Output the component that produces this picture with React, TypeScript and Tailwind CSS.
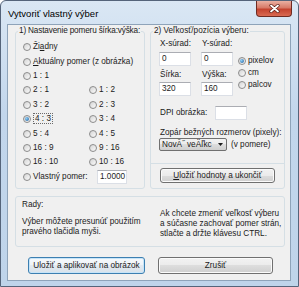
import React from 'react';

const Radio = ({ checked = false }: { checked?: boolean }) => (
  <span className="flex h-[8px] w-[8px] shrink-0 items-center justify-center rounded-full border border-[#8c8c8c] bg-[linear-gradient(135deg,#d4d4d4,#fbfbfb)]">
    {checked && <span className="h-[4px] w-[4px] rounded-full bg-[radial-gradient(circle_at_35%_35%,#8fd0f7,#1a5a9c)]" />}
  </span>
);

const Option = ({ children, checked = false }: { children: React.ReactNode; checked?: boolean }) => (
  <div className="flex items-center gap-[2px]">
    <Radio checked={checked} />
    <span>{children}</span>
  </div>
);

const TextBox = ({ value = '', className = '' }: { value?: string; className?: string }) => (
  <div className={`h-[14px] border border-[#dbdfe6] border-t-[#abadb3] bg-white pl-[2px] leading-[12px] ${className}`}>{value}</div>
);

const Button = ({ children, primary = false, className = '' }: { children: React.ReactNode; primary?: boolean; className?: string }) => (
  <div
    className={`flex items-center justify-center whitespace-nowrap rounded-[3px] border ${
      primary
        ? 'border-[#3c7fb1] bg-[linear-gradient(180deg,#f6f9fc_0%,#eef3f8_50%,#e2e9f0_50%,#d8e2eb_100%)] shadow-[inset_0_0_0_1px_#c6e4f8]'
        : 'border-[#707070] bg-[linear-gradient(180deg,#f2f2f2_0%,#ebebeb_50%,#dddddd_50%,#cfcfcf_100%)] shadow-[inset_0_0_0_1px_#fbfbfb]'
    } ${className}`}
  >
    {children}
  </div>
);

const ratios: [string, string][] = [
  ['2 : 1', '1 : 2'],
  ['3 : 2', '2 : 3'],
  ['4 : 3', '3 : 4'],
  ['5 : 4', '4 : 5'],
  ['16 : 9', '9 : 16'],
  ['16 : 10', '10 : 16'],
];

export default function App() {
  return (
    <div className="h-[287px] w-[299px] bg-white font-['Liberation_Sans',Arial,sans-serif] text-[8.2px] leading-[10px] text-[#1b1b1b]">
      <div className="flex h-full w-full flex-col rounded-t-[6px] border border-[#55647a] bg-[linear-gradient(180deg,#dae7f4_0%,#c2d6ec_40%,#bfd4ea_100%)]">
        {/* title bar */}
        <div className="flex h-[23px] shrink-0 items-start justify-between">
          <span className="pl-[7px] pt-[7px] text-[9.5px] leading-[12px] text-black">Vytvoriť vlastný výber</span>
          <div className="mr-[6px] flex h-[16px] w-[36px] items-center justify-center rounded-b-[4px] border border-t-0 border-[#6f2b22] bg-[linear-gradient(180deg,#eab0a2_0%,#d77a68_45%,#c4432f_55%,#d96a52_100%)]">
            <svg width="11" height="9" viewBox="0 0 11 9">
              <path d="M2 1.5 L9 7.5 M9 1.5 L2 7.5" stroke="#5a1d16" strokeWidth="3.2" strokeLinecap="round" />
              <path d="M2 1.5 L9 7.5 M9 1.5 L2 7.5" stroke="#ffffff" strokeWidth="1.8" strokeLinecap="round" />
            </svg>
          </div>
        </div>

        {/* client area */}
        <div className="mb-[5px] ml-[6px] mr-[7px] flex-1 border border-[#8ea3b9] bg-[#f0f0f0] pl-[7px] pt-[1px]">
          <div className="flex gap-[5px]">
            <fieldset className="h-[163px] w-[130px] rounded-[3px] border border-[#d5dfe5]">
              <legend className="ml-[2px] whitespace-nowrap px-[1px] tracking-[-0.15px]">1) Nastavenie pomeru šírka:výška:</legend>
              <div className="pl-[7px] pt-[4px]">
                <div className="flex h-[14.4px] items-center">
                  <Option>
                    Ži<span className="underline underline-offset-[1px]">a</span>dny
                  </Option>
                </div>
                <div className="flex h-[14.4px] items-center">
                  <Option>
                    <span className="underline underline-offset-[1px]">A</span>ktuálny pomer (z obrázka)
                  </Option>
                </div>
                <div className="flex h-[14.4px] items-center">
                  <Option>1 : 1</Option>
                </div>
                {ratios.map(([a, b]) => (
                  <div key={a} className="grid h-[14.4px] grid-cols-[66px_1fr] items-center">
                    <Option checked={a === '4 : 3'}>
                      {a === '4 : 3' ? <span className="border border-dotted border-[#6a6a6a] px-[1px]">{a}</span> : a}
                    </Option>
                    <Option>{b}</Option>
                  </div>
                ))}
                <div className="flex h-[15px] items-center">
                  <Option>
                    <span className="inline-block w-[64px]">Vlastný pomer:</span>
                  </Option>
                  <TextBox value="1.0000" className="h-[13px] w-[30px] leading-[11px]" />
                </div>
              </div>
            </fieldset>

            <fieldset className="h-[163px] w-[135px] rounded-[3px] border border-[#d5dfe5]">
              <legend className="ml-[2px] whitespace-nowrap px-[1px]">2) Veľkosť/pozícia výberu:</legend>
              <div className="pl-[8px] pt-[3px]">
                <div className="flex">
                  <div className="grid grid-cols-[32px_32px] gap-x-[10px]">
                    <span className="pl-[1px]">X-súrad:</span>
                    <span className="pl-[1px]">Y-súrad:</span>
                    <TextBox value="0" className="mt-[3px]" />
                    <TextBox value="0" className="mt-[3px]" />
                    <span className="mt-[4px] pl-[1px]">Šírka:</span>
                    <span className="mt-[4px] pl-[1px]">Výška:</span>
                    <TextBox value="320" className="mt-[2px]" />
                    <TextBox value="160" className="mt-[2px]" />
                  </div>
                  <div className="ml-[5px] flex flex-col pt-[16px]">
                    <div className="flex h-[12px] items-center">
                      <Option checked>pixelov</Option>
                    </div>
                    <div className="flex h-[12px] items-center">
                      <Option>cm</Option>
                    </div>
                    <div className="flex h-[12px] items-center">
                      <Option>palcov</Option>
                    </div>
                  </div>
                </div>
                <div className="mt-[10px] flex items-center">
                  <span className="w-[56px] pl-[1px]">DPI obrázka:</span>
                  <TextBox className="w-[32px]" />
                </div>
                <div className="mt-[8px] whitespace-nowrap pl-[1px]">Zopár bežných rozmerov (pixely):</div>
                <div className="flex items-center">
                  <div className="flex h-[13px] w-[68px] items-center rounded-[2px] border border-[#707070] bg-[linear-gradient(180deg,#f2f2f2_0%,#ebebeb_50%,#dddddd_50%,#cfcfcf_100%)]">
                    <span className="flex-1 overflow-hidden whitespace-nowrap pl-[2px] leading-[11px]">NovĂ˝ veÄľkc</span>
                    <span className="flex h-full w-[11px] items-center justify-center">
                      <svg width="5" height="3" viewBox="0 0 5 3">
                        <path d="M0 0 H5 L2.5 3 Z" fill="#1b1b1b" />
                      </svg>
                    </span>
                  </div>
                  <span className="ml-[4px]">(v pomere)</span>
                </div>
              </div>
              <div className="mt-[12px] border-t border-[#d5dfe5]" />
              <div className="pl-[9px] pt-[4px]">
                <Button className="h-[15px] w-[115px]">
                  <span>
                    <span className="underline underline-offset-[1px]">U</span>ložiť hodnoty a ukončiť
                  </span>
                </Button>
              </div>
            </fieldset>
          </div>

          <div className="mt-[7px] flex h-[51px] w-[270px] rounded-[3px] border border-[#d5dfe5]">
            <div className="w-[144px] pl-[6px] pt-[3px]">
              <div>Rady:</div>
              <div className="mt-[7px]">
                Výber môžete presunúť použitím
                <br />
                pravého tlačidla myši.
              </div>
            </div>
            <div className="whitespace-nowrap pt-[12px]">
              Ak chcete zmeniť veľkosť výberu
              <br />a súčasne zachovať pomer strán,
              <br />
              stlačte a držte klávesu CTRL.
            </div>
          </div>

          <div className="ml-[13px] mt-[10px] flex gap-[13px]">
            <Button primary className="h-[17px] w-[117px]">
              Uložiť a aplikovať na obrázok
            </Button>
            <Button className="h-[17px] w-[115px]">Zrušiť</Button>
          </div>
        </div>
      </div>
    </div>
  );
}
